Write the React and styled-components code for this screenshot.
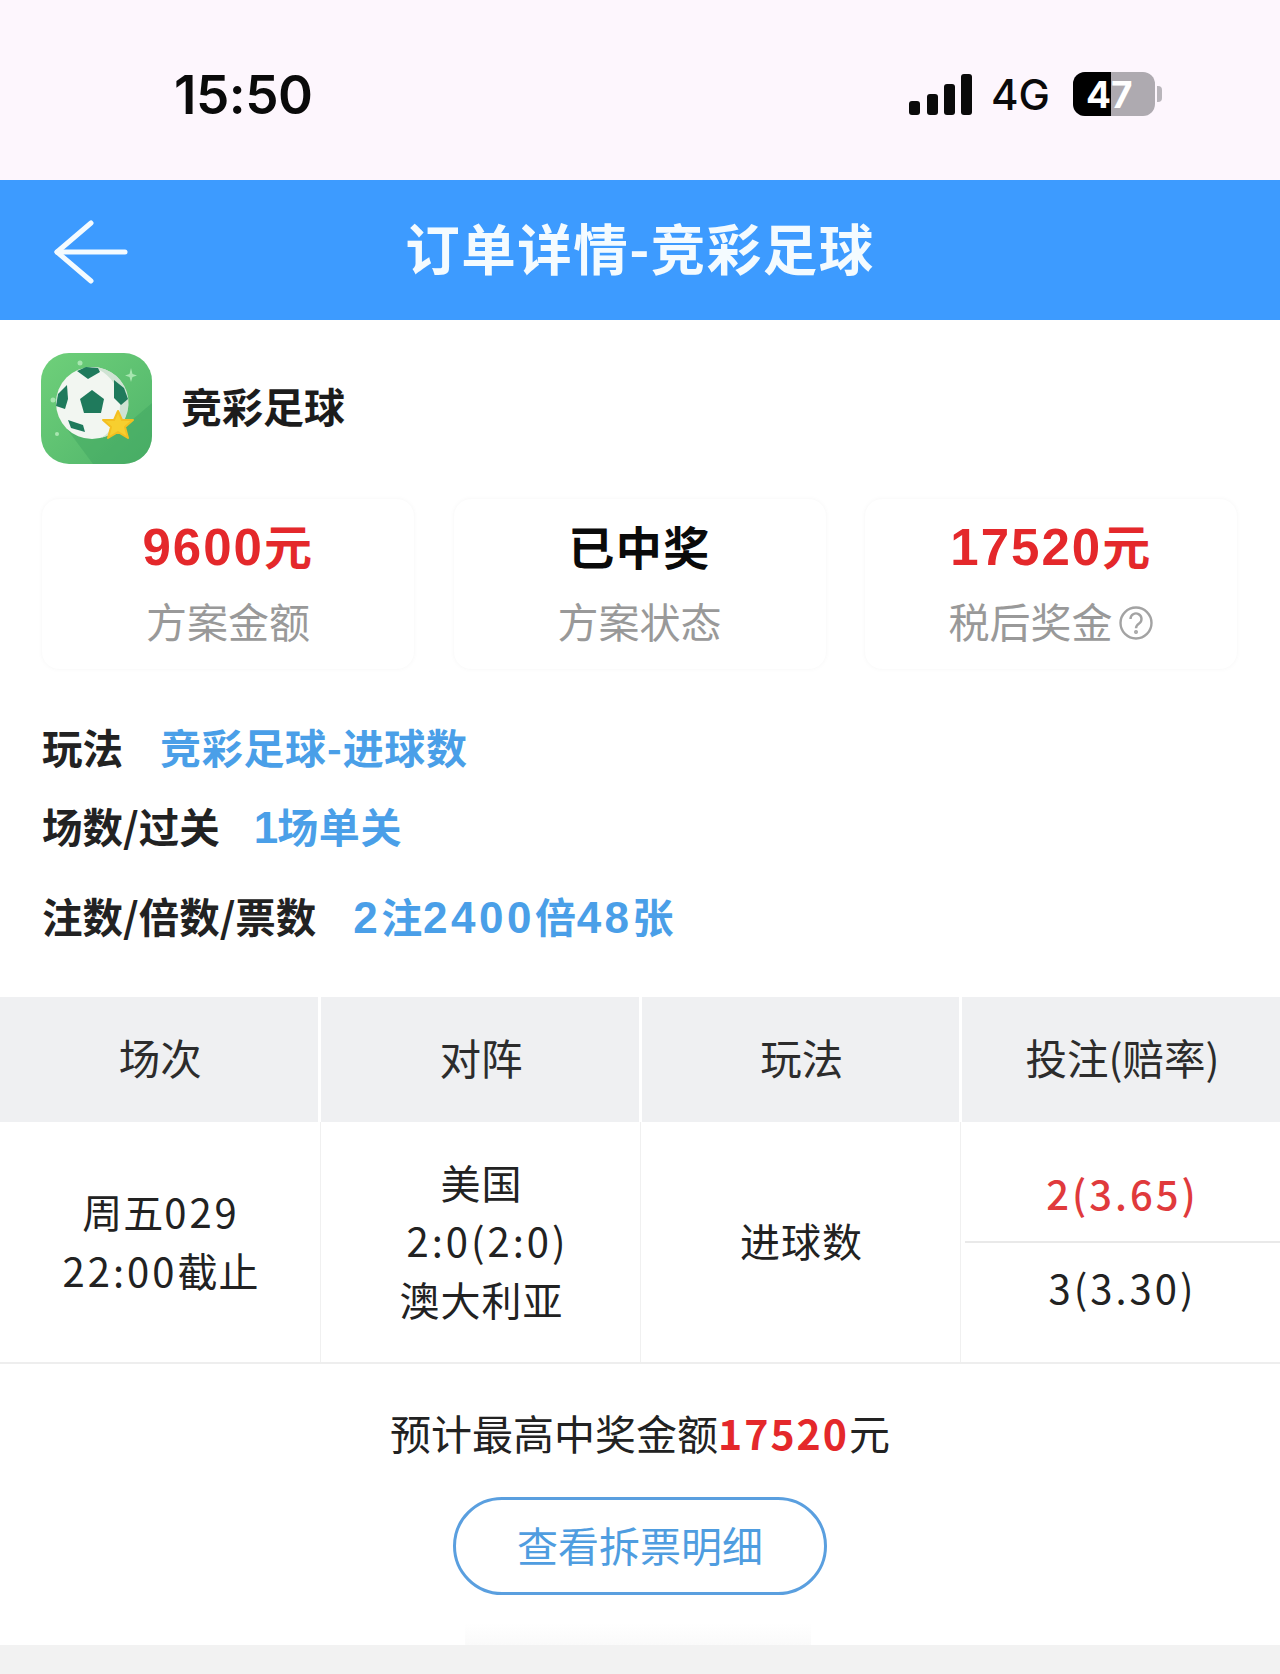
import React from 'react';
import styled, { createGlobalStyle } from 'styled-components';

const cjk = '"Noto Sans CJK SC", "Liberation Sans", sans-serif';
const latin = '"Liberation Sans", "Noto Sans CJK SC", sans-serif';

const Global = createGlobalStyle`
  html, body {
    margin: 0;
    padding: 0;
    background: #fff;
  }
  * {
    box-sizing: border-box;
  }
`;

const Page = styled.div`
  width: 1280px;
  height: 1674px;
  overflow: hidden;
  display: flex;
  flex-direction: column;
  background: #fff;
  font-family: ${cjk};
  color: #222;
`;

const StatusBar = styled.div`
  height: 180px;
  flex: none;
  background: #fdf6fd;
  display: flex;
  align-items: center;
  justify-content: space-between;
  padding: 8px 118px 0 174px;
`;

const Time = styled.div`
  font-family: "Inter", "Liberation Sans", sans-serif;
  font-size: 53px;
  font-weight: 600;
  color: #0a0a0a;
  letter-spacing: -0.5px;
  padding-top: 2px;
`;

const StatusRight = styled.div`
  display: flex;
  align-items: center;
  gap: 18px;
`;

const NetLabel = styled.div`
  font-family: "Inter", "Liberation Sans", sans-serif;
  font-size: 42px;
  font-weight: 500;
  color: #0a0a0a;
`;

const Battery = styled.div`
  width: 82px;
  height: 44px;
  border-radius: 12px;
  overflow: hidden;
  display: flex;
  background: #aeaab0;
  font-family: "Inter", "Liberation Sans", sans-serif;
  font-size: 37px;
  font-weight: 700;
  color: #fff;
`;

const BatteryFill = styled.div`
  width: 38px;
  background: #000;
  display: flex;
  justify-content: flex-end;
  align-items: center;
`;

const BatteryRest = styled.div`
  display: flex;
  align-items: center;
`;

const BatteryWrap = styled.div`
  display: flex;
  align-items: center;
  gap: 2px;
  margin-left: 5px;
`;

const BatteryCap = styled.div`
  width: 5px;
  height: 16px;
  border-radius: 0 4px 4px 0;
  background: #b9b5bb;
`;

const NavBar = styled.div`
  height: 140px;
  flex: none;
  background: #3d9bff;
  display: flex;
  align-items: center;
  justify-content: center;
  position: relative;
`;

const BackIcon = styled.svg`
  position: absolute;
  left: 53px;
  top: 40px;
`;

const NavTitle = styled.div`
  font-size: 54.5px;
  font-weight: 700;
  color: #f4fbff;
  letter-spacing: 1.5px;
  margin-top: -7px;
`;

const Content = styled.div`
  flex: 1;
  display: flex;
  flex-direction: column;
`;

const Brand = styled.div`
  display: flex;
  align-items: center;
  gap: 29px;
  padding: 33px 41px 0;
`;

const BrandName = styled.div`
  font-size: 41px;
  font-weight: 700;
  color: #1c1c1c;
  margin-top: -8px;
`;

const Cards = styled.div`
  display: grid;
  grid-template-columns: repeat(3, 374px);
  justify-content: space-between;
  padding: 34px 42px 0 41px;
`;

const Card = styled.div`
  height: 172px;
  border: 1px solid #fbfbfb;
  box-shadow: 0 0 4px rgba(0, 0, 0, 0.025);
  border-radius: 18px;
  display: flex;
  flex-direction: column;
  align-items: center;
  padding-top: 14px;
`;

const CardValue = styled.div`
  height: 64px;
  font-size: 46px;
  line-height: 64px;
  font-weight: 700;
  color: ${(p) => (p.$red ? '#e4282b' : '#0a0a0a')};
  letter-spacing: 1.5px;
`;

const CardDigits = styled.span`
  font-family: ${latin};
  font-size: 51px;
  line-height: 1;
  letter-spacing: 2px;
`;

const CardUnit = styled.span`
  font-size: 48px;
  line-height: 1;
`;

const CardLabel = styled.div`
  margin-top: 13px;
  font-size: 41px;
  line-height: 60px;
  color: #999;
  display: flex;
  align-items: center;
  gap: 5px;
`;

const HelpIcon = styled.svg`
  margin-top: 5px;
`;

const Details = styled.div`
  padding: 46px 42px 0;
  display: flex;
  flex-direction: column;
`;

const DetailRow = styled.div`
  display: flex;
  align-items: center;
  height: 60px;
  gap: 37px;
  margin-top: ${(p) => p.$top}px;
`;

const DetailKey = styled.div`
  font-size: 40.5px;
  font-weight: 700;
  color: #222;
`;

const DetailValue = styled.div`
  font-size: 41px;
  font-weight: 700;
  color: #4a9fe8;
  letter-spacing: 0.7px;
`;

const DetailDigits = styled.span`
  font-family: ${latin};
  font-size: 44px;
  letter-spacing: 3.5px;
`;

const LoneDigit = styled(DetailDigits)`
  letter-spacing: -1px;
  margin-left: -3px;
`;

const Table = styled.div`
  margin-top: 52px;
  border-bottom: 2px solid #eeeeee;
`;

const HeadRow = styled.div`
  display: grid;
  grid-template-columns: repeat(4, 1fr);
  gap: 3px;
`;

const HeadCell = styled.div`
  height: 125px;
  padding: 0 0 6px 3px;
  background: #eff0f2;
  display: flex;
  align-items: center;
  justify-content: center;
  font-size: 41.5px;
  color: #2c2c2c;
`;

const BodyRow = styled.div`
  display: grid;
  grid-template-columns: repeat(4, 1fr);
  height: 240px;
`;

const BodyCell = styled.div`
  display: flex;
  flex-direction: column;
  align-items: center;
  justify-content: center;
  padding: 0 0 3px 2px;
  font-size: 40px;
  line-height: 58.5px;
  color: #222;
  letter-spacing: 1px;
  border-left: ${(p) => (p.$first ? 'none' : '1px solid #f0f0f0')};
`;

const BetCell = styled(BodyCell)`
  align-items: stretch;
`;

const Num = styled.span`
  letter-spacing: 3px;
`;

const Score = styled(Num)`
  padding-left: 12px;
`;

const Bet = styled.div`
  height: ${(p) => (p.$top ? 94 : 90)}px;
  padding-bottom: ${(p) => (p.$top ? 2 : 0)}px;
  display: flex;
  align-items: center;
  justify-content: center;
  margin-left: 2px;
  color: ${(p) => (p.$red ? '#e03a3c' : '#222')};
  font-weight: ${(p) => (p.$red ? 500 : 400)};
  border-bottom: ${(p) => (p.$top ? '2px solid #e9e9e9' : 'none')};
`;

const Summary = styled.div`
  margin-top: 36px;
  height: 64px;
  display: flex;
  align-items: center;
  justify-content: center;
  font-size: 41px;
  color: #222;
`;

const SummaryAmount = styled.span`
  color: #e4282b;
  font-weight: 700;
  letter-spacing: 2px;
`;

const DetailButton = styled.div`
  align-self: center;
  margin-top: 33px;
  width: 374px;
  height: 98px;
  padding-bottom: 5px;
  border: 3px solid #5a9fdf;
  border-radius: 49px;
  display: flex;
  align-items: center;
  justify-content: center;
  font-size: 41px;
  color: #4f9de0;
`;

const Footer = styled.div`
  margin-top: auto;
  height: 29px;
  background: #f2f2f2;
  position: relative;

  &::before {
    content: '';
    position: absolute;
    left: 465px;
    width: 346px;
    top: -22px;
    height: 22px;
    background: linear-gradient(#fff, #fafafa);
  }
`;

const Signal = () => (
  <svg width="64" height="41" viewBox="0 0 64 41">
    <rect x="0" y="27" width="11" height="14" rx="3" fill="#0a0a0a" />
    <rect x="18" y="20" width="11" height="21" rx="3" fill="#0a0a0a" />
    <rect x="35" y="10" width="11" height="31" rx="3" fill="#0a0a0a" />
    <rect x="52" y="0" width="11" height="41" rx="3" fill="#0a0a0a" />
  </svg>
);

const Help = () => (
  <HelpIcon width="36" height="36" viewBox="0 0 36 36" fill="none" stroke="#a3a3a3" strokeWidth="2.4">
    <circle cx="18" cy="18" r="15.5" />
    <path d="M12.5 14a5.5 5.5 0 1 1 8.6 4.5c-2 1.4-3.1 2.4-3.1 4.8" />
    <circle cx="18" cy="27" r="0.8" />
  </HelpIcon>
);

const Logo = () => (
  <svg width="111" height="111" viewBox="0 0 111 111">
    <defs>
      <linearGradient id="logoBg" x1="0" y1="0" x2="1" y2="1">
        <stop offset="0" stopColor="#6fd07a" />
        <stop offset="1" stopColor="#4fb46a" />
      </linearGradient>
    </defs>
    <rect width="111" height="111" rx="28" fill="url(#logoBg)" />
    <path d="M78 78 L111 50 V83 A28 28 0 0 1 83 111 H52 L26 76 Z" fill="#3fa45f" opacity="0.45" />
    <circle cx="51" cy="50" r="36" fill="#f2f6f1" />
    <path d="M51 14 A36 36 0 0 1 60 85 A39 39 0 0 0 51 14 Z" fill="#cfe3d3" />
    <g fill="#1f7a5c">
      <path d="M51 37 L63 46 L60 60 L43 60 L39 46 Z" />
      <path d="M36 18 L45 14 L57 15 L59 19 L47 26 Z" />
      <path d="M73 27 L83 35 L87 46 L80 52 L73 45 Z" />
      <path d="M26 32 L17 41 L15 53 L24 56 L27 46 Z" />
      <path d="M27 67 L42 72 L44 79 L30 75 Z" />
    </g>
    <path
      d="M77 58 L81 67 L92 67 L84 74 L87 85 L77 79 L67 85 L70 74 L62 67 L73 67 Z"
      fill="#f7cf2f"
      stroke="#f4bf20"
      strokeWidth="2"
      strokeLinejoin="round"
    />
    <g fill="#a8e6b0">
      <circle cx="39" cy="10" r="2.5" />
      <circle cx="12" cy="47" r="2.5" />
      <circle cx="16" cy="81" r="2" />
      <path d="M90 15 L91.5 21 L96 22.5 L91.5 24 L90 29 L88.5 24 L84 22.5 L88.5 21 Z" />
    </g>
  </svg>
);

const App = () => (
  <Page>
    <Global />
    <StatusBar>
      <Time>15:50</Time>
      <StatusRight>
        <Signal />
        <NetLabel>4G</NetLabel>
        <BatteryWrap>
          <Battery>
            <BatteryFill>4</BatteryFill>
            <BatteryRest>7</BatteryRest>
          </Battery>
          <BatteryCap />
        </BatteryWrap>
      </StatusRight>
    </StatusBar>
    <NavBar>
      <BackIcon width="76" height="64" viewBox="0 0 76 64" fill="none" stroke="#f4fbff" strokeWidth="5" strokeLinecap="round" strokeLinejoin="round">
        <path d="M38 3 L4 32 L38 61" />
        <path d="M4 32 H72" />
      </BackIcon>
      <NavTitle>订单详情-竞彩足球</NavTitle>
    </NavBar>
    <Content>
      <Brand>
        <Logo />
        <BrandName>竞彩足球</BrandName>
      </Brand>
      <Cards>
        <Card>
          <CardValue $red><CardDigits>9600</CardDigits><CardUnit>元</CardUnit></CardValue>
          <CardLabel>方案金额</CardLabel>
        </Card>
        <Card>
          <CardValue>已中奖</CardValue>
          <CardLabel>方案状态</CardLabel>
        </Card>
        <Card>
          <CardValue $red><CardDigits>17520</CardDigits><CardUnit>元</CardUnit></CardValue>
          <CardLabel>税后奖金<Help /></CardLabel>
        </Card>
      </Cards>
      <Details>
        <DetailRow $top={0}>
          <DetailKey>玩法</DetailKey>
          <DetailValue>竞彩足球-进球数</DetailValue>
        </DetailRow>
        <DetailRow $top={19}>
          <DetailKey>场数/过关</DetailKey>
          <DetailValue><LoneDigit>1</LoneDigit>场单关</DetailValue>
        </DetailRow>
        <DetailRow $top={30}>
          <DetailKey>注数/倍数/票数</DetailKey>
          <DetailValue>
            <DetailDigits>2</DetailDigits>注<DetailDigits>2400</DetailDigits>倍<DetailDigits>48</DetailDigits>张
          </DetailValue>
        </DetailRow>
      </Details>
      <Table>
        <HeadRow>
          <HeadCell>场次</HeadCell>
          <HeadCell>对阵</HeadCell>
          <HeadCell>玩法</HeadCell>
          <HeadCell>投注(赔率)</HeadCell>
        </HeadRow>
        <BodyRow>
          <BodyCell $first>
            <div>周五<Num>029</Num></div>
            <div><Num>22:00</Num>截止</div>
          </BodyCell>
          <BodyCell>
            <div>美国</div>
            <Score>2:0(2:0)</Score>
            <div>澳大利亚</div>
          </BodyCell>
          <BodyCell>进球数</BodyCell>
          <BetCell>
            <Bet $top $red><Num>2(3.65)</Num></Bet>
            <Bet><Num>3(3.30)</Num></Bet>
          </BetCell>
        </BodyRow>
      </Table>
      <Summary>
        预计最高中奖金额<SummaryAmount>17520</SummaryAmount>元
      </Summary>
      <DetailButton>查看拆票明细</DetailButton>
      <Footer />
    </Content>
  </Page>
);

export default App;
